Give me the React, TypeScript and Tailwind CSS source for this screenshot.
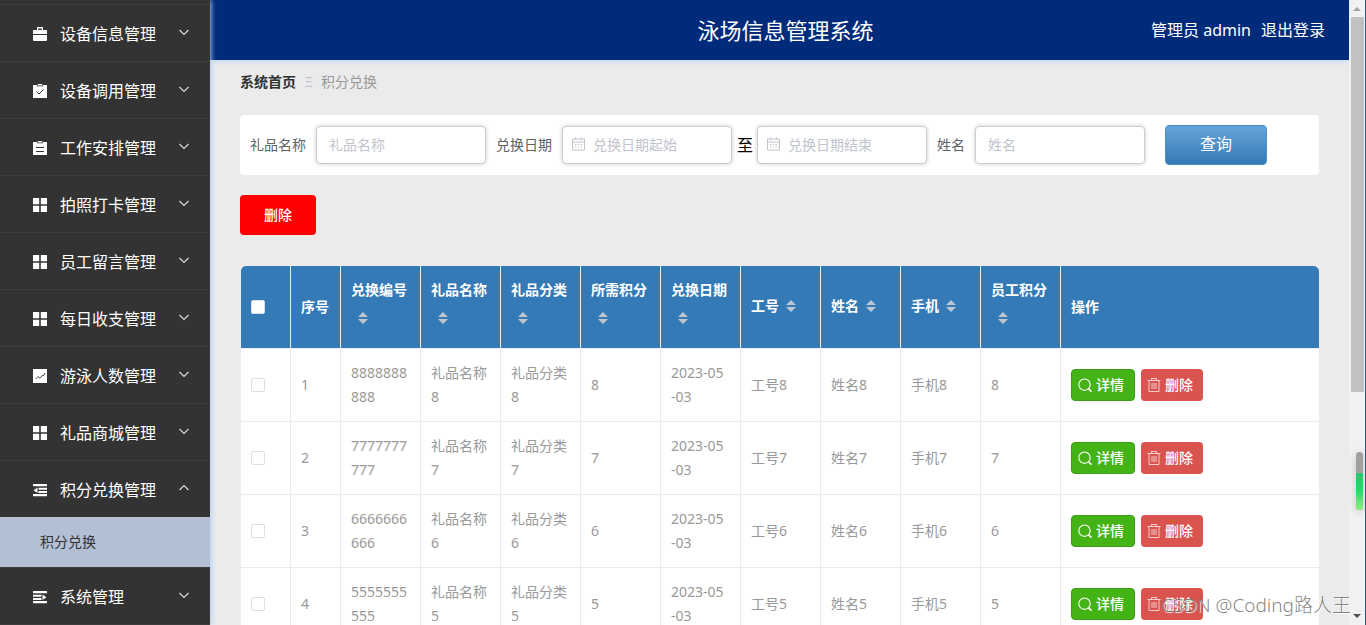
import type { ReactNode } from 'react'

type IconName = 'suitcase' | 'claim' | 'order' | 'menu' | 'marketing' | 'fold' | 'unfold'

interface MenuItem {
    label: string
    icon: IconName
    children?: string[]
}

interface Column {
    label: string
    sortable?: boolean
}

const menuItems: MenuItem[] = [
    { label: '设备信息管理', icon: 'suitcase' },
    { label: '设备调用管理', icon: 'claim' },
    { label: '工作安排管理', icon: 'order' },
    { label: '拍照打卡管理', icon: 'menu' },
    { label: '员工留言管理', icon: 'menu' },
    { label: '每日收支管理', icon: 'menu' },
    { label: '游泳人数管理', icon: 'marketing' },
    { label: '礼品商城管理', icon: 'menu' },
    { label: '积分兑换管理', icon: 'fold', children: ['积分兑换'] },
    { label: '系统管理', icon: 'unfold' },
]

const columns: Column[] = [
    { label: '序号' },
    { label: '兑换编号', sortable: true },
    { label: '礼品名称', sortable: true },
    { label: '礼品分类', sortable: true },
    { label: '所需积分', sortable: true },
    { label: '兑换日期', sortable: true },
    { label: '工号', sortable: true },
    { label: '姓名', sortable: true },
    { label: '手机', sortable: true },
    { label: '员工积分', sortable: true },
    { label: '操作' },
]

const rows = [8, 7, 6, 5].map((n) => ({
    n,
    code: String(n).repeat(10),
    date: ['2023-05', '-03'],
}))

const icons: Record<IconName, ReactNode> = {
    suitcase: (
        <>
            <path d="M4 3.500V1C4 .4 4.400 0 5 0h4c.6 0 1 .4 1 1v2.500H8.700V1.400H5.300v2.100z" />
            <path d="M1 3h12c.6 0 1 .4 1 1v3H0V4c0-.6.4-1 1-1z" />
            <path d="M0 8h14v5.200c0 .5-.3.8-.8.8H.8c-.5 0-.8-.3-.8-.8z" />
        </>
    ),
    claim: (
        <>
            <path d="M0 1h4v1.300h6V1h4v13H0z" />
            <path d="M4.700 0h4.600v1.500H4.700z" />
            <path d="M3.500 7.500L6 10l4.500-4.500" fill="none" stroke="#333333" />
        </>
    ),
    order: (
        <>
            <path d="M0 1h4v1.300h6V1h4v13H0z" />
            <path d="M4.700 0h4.600v1.500H4.700z" />
            <path d="M3 6.500h8M3 10.500h8" stroke="#333333" />
        </>
    ),
    menu: <path d="M0 0h6.200v6.200H0zM7.800 0H14v6.200H7.800zM0 7.800h6.200V14H0zM7.800 7.800H14V14H7.800z" />,
    marketing: (
        <>
            <path d="M0 0h14v14H0z" />
            <path d="M2.500 10l2.500-2.500 2 1.700 2.500-3 .8.800L12 4" fill="none" stroke="#333333" strokeWidth=".9" />
        </>
    ),
    fold: <path d="M0 1h14v2.300H0zM5.500 4.700H14v2H5.500zM5.500 8H14v2H5.500zM0 11h14v2.300H0zM4.500 4.500v5.400L.5 7.200z" />,
    unfold: <path d="M0 1h14v2.300H0zM0 4.700h8.500v2H0zM0 8h8.500v2H0zM0 11h14v2.300H0zM9.500 4.500v5.400l4-2.700z" />,
}

function Chevron({ open }: { open?: boolean }) {
    return (
        <svg viewBox="0 0 12 12" className="mb-1 size-3" fill="none" stroke="#d8d8d8" strokeWidth="1.2">
            <path d={open ? 'M1.500 8L6 3.500 10.500 8' : 'M1.500 4L6 8.500 10.500 4'} />
        </svg>
    )
}

function Sidebar() {
    return (
        <nav className="relative z-10 w-[210px] shrink-0 overflow-hidden bg-[#333333] pt-1 text-white shadow-[1px_0_5px_#a8ccf5]">
            <ul>
                {menuItems.map((item) => (
                    <li key={item.label}>
                        <a href="#" className="flex h-[57px] items-center border-t border-[#3d3d3d] pt-0.5 pr-5 pl-[33px]">
                            <svg viewBox="0 0 14 14" className="size-3.5" fill="currentColor">{icons[item.icon]}</svg>
                            <span className="flex-1 pl-[13px] text-base">{item.label}</span>
                            <Chevron open={!!item.children} />
                        </a>
                        {item.children?.map((child) => (
                            <a key={child} href="#" className="flex h-[50px] items-center bg-[#b3bfd4] pl-10 text-sm text-[#333333]">
                                {child}
                            </a>
                        ))}
                    </li>
                ))}
            </ul>
            <div className="border-t border-[#3d3d3d]" />
        </nav>
    )
}

function CalendarIcon() {
    return (
        <svg viewBox="0 0 14 14" className="pointer-events-none absolute top-[11px] left-2.5 size-3.5" fill="none" stroke="#c0c4cc">
            <path d="M.5 2h12v11H.5zM.5 5h12M3.500.5v2.500M9.500.5v2.500" />
            <path d="M3 7.500h1.500m1.200 0h1.500m1.200 0h1.500M3 10h1.500m1.200 0h1.500m1.200 0h1.500" />
        </svg>
    )
}

interface FieldProps {
    id: string
    placeholder: string
    calendar?: boolean
}

function Field({ id, placeholder, calendar }: FieldProps) {
    return (
        <div className="relative">
            {calendar && <CalendarIcon />}
            <input
                id={id}
                type="text"
                aria-label={placeholder}
                placeholder={placeholder}
                className={`h-[38px] w-[170px] rounded border border-[#cccccc] bg-white pr-3 pb-0.5 text-sm shadow-[0_0_4px_#cccccc] outline-none placeholder:text-[#c0c4cc] ${calendar ? 'pl-[30px]' : 'pl-3'}`}
            />
        </div>
    )
}

function SearchForm() {
    return (
        <form className="flex h-[60px] items-center rounded bg-white px-2.5 text-sm text-[#606266]">
            <label htmlFor="gift" className="pr-2.5">礼品名称</label>
            <Field id="gift" placeholder="礼品名称" />
            <label htmlFor="start" className="px-2.5">兑换日期</label>
            <Field id="start" placeholder="兑换日期起始" calendar />
            <span className="pr-1 pl-[5px] text-base text-black">至</span>
            <Field id="end" placeholder="兑换日期结束" calendar />
            <label htmlFor="name" className="px-2.5">姓名</label>
            <Field id="name" placeholder="姓名" />
            <button
                type="button"
                className="ml-5 h-10 w-[102px] rounded border border-[#4a8cc8] bg-linear-to-b from-[#67a3d9] to-[#337ab7] pb-0.5 text-base text-white"
            >
                查询
            </button>
        </form>
    )
}

function SortCarets() {
    return (
        <svg viewBox="0 0 24 28" className="h-7 w-6" fill="#c0c4cc">
            <path d="M7 13l5-5 5 5zM7 15h10l-5 5z" />
        </svg>
    )
}

function CheckBox({ label }: { label: string }) {
    return (
        <input
            type="checkbox"
            aria-label={label}
            className="block size-3.5 appearance-none rounded-xs border border-[#dcdfe6] bg-white"
        />
    )
}

function RowActions() {
    return (
        <div className="flex gap-1.5 text-sm text-white">
            <button type="button" className="flex h-8 w-16 items-center gap-1 rounded border border-[#3c9f19] bg-[#44b316] pl-1.5 font-medium">
                <svg viewBox="0 0 14 14" className="size-3.5" fill="none" stroke="currentColor" strokeWidth="1.100">
                    <circle cx="6.500" cy="6.700" r="5.700" />
                    <path d="M10.500 10.700l3 3" strokeWidth="1.600" />
                </svg>
                详情
            </button>
            <button type="button" className="flex h-8 w-[62px] items-center gap-1 rounded bg-[#d9534f] pl-1.5 font-medium">
                <svg viewBox="0 0 14 14" className="size-3.5" fill="none" stroke="currentColor" strokeOpacity=".7">
                    <path d="M.5 2.500h13M4.500 2.500v-2h5v2M2 2.500v11h10v-11M5 5v6M7 5v6M9 5v6" />
                </svg>
                删除
            </button>
        </div>
    )
}

function ExchangeTable() {
    return (
        <table className="w-full table-fixed border-separate border-spacing-0 overflow-hidden rounded-t-md border-t border-l border-[#ebeef0] bg-white text-left text-sm leading-6 text-[#999999]">
            <colgroup>
                <col className="w-[50px]" />
                <col className="w-[50px]" />
                {columns.slice(1, -1).map((col) => <col key={col.label} className="w-20" />)}
                <col />
            </colgroup>
            <thead>
                <tr className="h-[83px] bg-[#337ab7] text-white [&>th]:border-b [&>th]:border-[#ebeef0] [&>th]:px-2.5 [&>th:not(:last-child)]:border-r">
                    <th><CheckBox label="全选" /></th>
                    {columns.map((col) => (
                        <th key={col.label} className="font-bold">
                            {col.sortable ? (
                                <div className={`flex flex-wrap leading-7 ${col.label.length > 2 ? 'pb-1.5' : 'pb-0.5'}`}>
                                    {col.label}
                                    <SortCarets />
                                </div>
                            ) : col.label}
                        </th>
                    ))}
                </tr>
            </thead>
            <tbody>
                {rows.map((row, index) => (
                    <tr key={row.n} className="[&>td]:border-b [&>td]:border-[#ebebeb] [&>td]:px-2.5 [&>td]:py-3 [&>td]:break-all [&>td:not(:last-child)]:border-r">
                        <td><CheckBox label={`选择${index + 1}`} /></td>
                        <td>{index + 1}</td>
                        <td>{row.code}</td>
                        <td>礼品名称{row.n}</td>
                        <td>礼品分类{row.n}</td>
                        <td>{row.n}</td>
                        <td>{row.date[0]}<br />{row.date[1]}</td>
                        <td>工号{row.n}</td>
                        <td>姓名{row.n}</td>
                        <td>手机{row.n}</td>
                        <td>{row.n}</td>
                        <td><RowActions /></td>
                    </tr>
                ))}
            </tbody>
        </table>
    )
}

function ScrollTrack() {
    return (
        <div className="flex w-[17px] shrink-0 flex-col items-center border-r border-[#2f5b8c] bg-[#f1f1f1]">
            <svg viewBox="0 0 16 17" className="h-[17px] w-4 shrink-0" fill="#a3a3a3"><path d="M4 11l4-4 4 4z" /></svg>
            <div className="h-3/5 w-[13px] bg-[#c1c1c1]" />
            <svg viewBox="0 0 16 17" className="mt-auto h-[17px] w-4 shrink-0" fill="#505050"><path d="M4 6l4 4 4-4z" /></svg>
        </div>
    )
}

export default function App() {
    return (
        <div className="relative flex h-screen overflow-hidden bg-[#ebebeb] font-['Noto_Sans','Noto_Sans_CJK_SC',sans-serif]">
            <Sidebar />
            <div className="flex min-w-0 flex-1 flex-col">
                <header className="grid h-[60px] shrink-0 grid-cols-[1fr_auto_1fr] items-center bg-[#002b7a] pr-6 pl-9 text-white shadow-[0_1px_6px_#b9d0ee]">
                    <h1 className="col-start-2 text-[22px]">泳场信息管理系统</h1>
                    <div className="flex justify-end gap-2.5 text-base">
                        <span>管理员 admin</span>
                        <a href="#">退出登录</a>
                    </div>
                </header>
                <main className="min-h-0 flex-1 overflow-hidden px-[30px]">
                    <div className="flex h-[45px] items-center border-b border-[#eeeeee] text-sm text-[#999999]">
                        <a href="#" className="font-bold text-[#303133]">系统首页</a>
                        <span className="w-[25px] text-center text-[#c0c4cc]">Ξ</span>
                        <span>积分兑换</span>
                    </div>
                    <div className="pt-2.5">
                        <SearchForm />
                    </div>
                    <button type="button" className="my-5 block h-10 w-[76px] rounded bg-[#ff0000] text-sm font-medium text-white">
                        删除
                    </button>
                    <div className="pt-2.5">
                        <ExchangeTable />
                    </div>
                </main>
            </div>
            <ScrollTrack />
            <div className="absolute right-[3px] bottom-[115px] h-[58px] w-[7px] overflow-hidden rounded-full bg-[#a0a0a0] shadow-[0_2px_8px_#00000033]">
                <div className="mt-[21px] h-[37px] bg-linear-to-b from-[#22c96b] via-[#30d46c] to-[#85f283]" />
            </div>
            <div className="pointer-events-none absolute right-[15px] bottom-1.5 z-20 text-[19px] leading-7 font-light text-[#666666]/80 [text-shadow:1px_1px_1px_#ffffff]">
                CSDN @Coding路人王
            </div>
        </div>
    )
}
